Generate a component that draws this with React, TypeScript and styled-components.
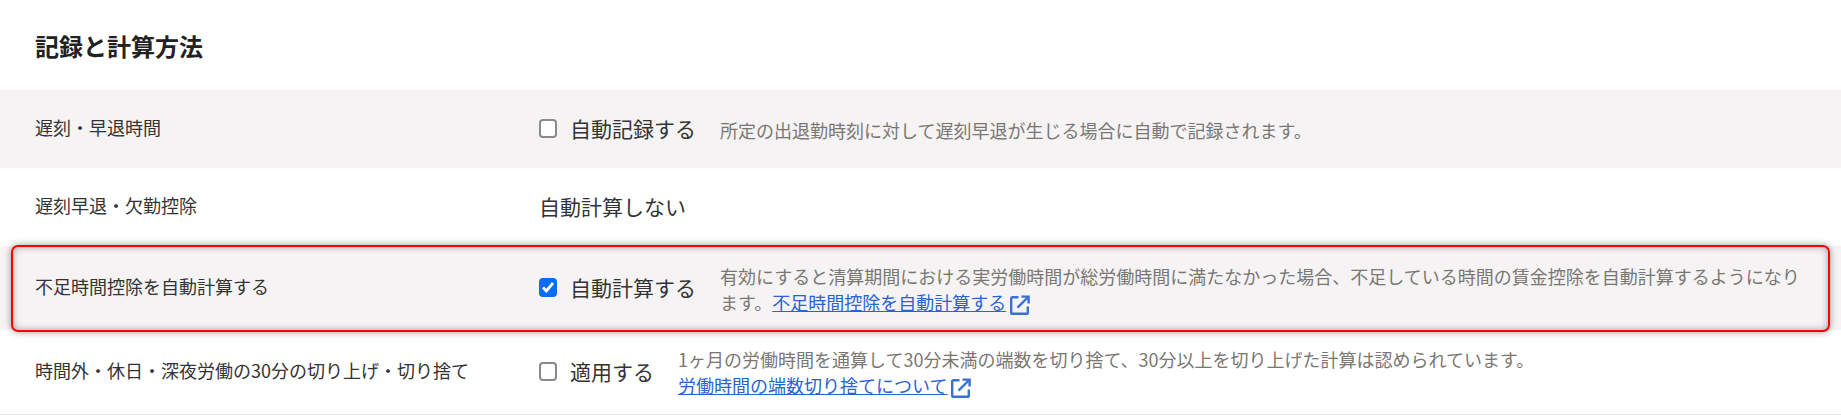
import React from 'react'
import styled, { createGlobalStyle } from 'styled-components'

const GlobalStyle = createGlobalStyle`
  html, body {
    margin: 0;
    padding: 0;
    background: #fff;
  }
  body {
    font-family: "Noto Sans CJK JP", "Noto Sans", sans-serif;
    color: #333;
  }
`

const Page = styled.div`
  width: 1841px;
  height: 419px;
  overflow: hidden;
  background: #fff;
`

const Title = styled.h2`
  margin: 0;
  height: 90px;
  padding-left: 35px;
  display: flex;
  align-items: center;
  font-size: 24px;
  font-weight: 700;
  color: #222;
  box-sizing: border-box;
`

const Row = styled.div<{ $gray?: boolean; $height: number; $highlight?: boolean; $bottomLine?: boolean }>`
  position: relative;
  display: flex;
  align-items: center;
  box-sizing: border-box;
  height: ${({ $height }) => $height}px;
  padding-left: 35px;
  background: ${({ $gray }) => ($gray ? '#f5f3f4' : '#fff')};
  ${({ $bottomLine }) => $bottomLine && `border-bottom: 1px solid #e6e6e6;`}
  ${({ $highlight }) =>
    $highlight &&
    `
    z-index: 1;

    &::after {
      content: '';
      position: absolute;
      left: 11px;
      right: 11px;
      top: -1px;
      bottom: -2px;
      border: 2px solid #f00;
      border-radius: 7px;
      box-shadow: 0 0 7px rgba(0, 0, 0, 0.4), inset 0 0 7px rgba(0, 0, 0, 0.35);
      pointer-events: none;
    }
  `}
`

const Label = styled.div`
  width: 504px;
  flex-shrink: 0;
  font-size: 18px;
  color: #333;
  padding-bottom: 4px;
`

const Field = styled.label`
  display: flex;
  align-items: center;
  flex-shrink: 0;
  font-size: 21px;
  color: #333;
  padding-bottom: 2px;
`

const Check = styled.input.attrs({ type: 'checkbox', readOnly: true })`
  appearance: none;
  width: 18px;
  height: 19px;
  margin: 0 13px 0 0;
  box-sizing: border-box;
  border: 2px solid #8a8a8a;
  border-radius: 4px;
  background: #fff;

  &:checked {
    border: none;
    background: #0a6cf5 url("data:image/svg+xml,%3Csvg xmlns='http://www.w3.org/2000/svg' viewBox='0 0 18 18'%3E%3Cpath d='M4 9.5l3.4 3.5L14 5' fill='none' stroke='%23fff' stroke-width='2.8'/%3E%3C/svg%3E") center / 100% no-repeat;
  }
`

const PlainValue = styled.div`
  font-size: 21px;
  color: #333;
  padding-bottom: 2px;
`

const Note = styled.div<{ $left: number; $width?: number; $lower?: boolean }>`
  margin-left: ${({ $left }) => $left}px;
  ${({ $width }) => $width && `width: ${$width}px;`}
  ${({ $lower }) => $lower && `padding-top: 2px;`}
  font-size: 18px;
  line-height: 26px;
  color: #7a7773;
`

const DocLink = styled.a`
  color: #2a62d4;
  text-decoration: underline;
`

const ExternalIcon = styled.svg`
  width: 20px;
  height: 20px;
  margin-left: 4px;
  vertical-align: -5px;
  fill: none;
  stroke: #3a70d2;
  stroke-width: 2.4;
`

const External = () => (
  <ExternalIcon viewBox="0 0 20 20">
    <path d="M8.5 2.2H2.6a1.4 1.4 0 0 0-1.4 1.4v13.8a1.4 1.4 0 0 0 1.4 1.4h13.8a1.4 1.4 0 0 0 1.4-1.4v-6" />
    <path d="M11.5 1.6H18.6V8.5" />
    <path d="M18.2 2L7.5 12.7" />
  </ExternalIcon>
)

export default function App() {
  return (
    <Page>
      <GlobalStyle />
      <Title>記録と計算方法</Title>

      <Row $gray $height={78}>
        <Label>遅刻・早退時間</Label>
        <Field>
          <Check />
          自動記録する
        </Field>
        <Note $left={24} $lower>所定の出退勤時刻に対して遅刻早退が生じる場合に自動で記録されます。</Note>
      </Row>

      <Row $height={78}>
        <Label>遅刻早退・欠勤控除</Label>
        <PlainValue>自動計算しない</PlainValue>
      </Row>

      <Row $gray $highlight $height={84}>
        <Label>不足時間控除を自動計算する</Label>
        <Field>
          <Check defaultChecked />
          自動計算する
        </Field>
        <Note $left={24} $width={1085} $lower>
          有効にすると清算期間における実労働時間が総労働時間に満たなかった場合、不足している時間の賃金控除を自動計算するようになります。
          <DocLink href="#">不足時間控除を自動計算する</DocLink>
          <External />
        </Note>
      </Row>

      <Row $height={85} $bottomLine>
        <Label>時間外・休日・深夜労働の30分の切り上げ・切り捨て</Label>
        <Field>
          <Check />
          適用する
        </Field>
        <Note $left={24}>
          1ヶ月の労働時間を通算して30分未満の端数を切り捨て、30分以上を切り上げた計算は認められています。
          <br />
          <DocLink href="#">労働時間の端数切り捨てについて</DocLink>
          <External />
        </Note>
      </Row>
    </Page>
  )
}
